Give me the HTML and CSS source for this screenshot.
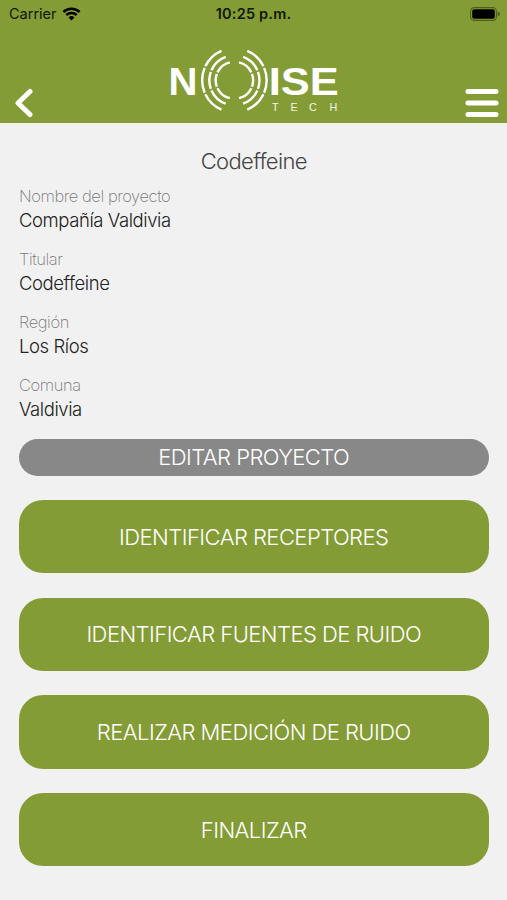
FILE: index.html
```html
<!DOCTYPE html>
<html lang="es">
<head>
	<meta charset="UTF-8">
	<meta name="viewport" content="width=device-width, initial-scale=1.0">
	<title>Noise Tech</title>
	<link rel="stylesheet" href="styles.css">
</head>
<body>
	<header class="header">
		<div class="status-bar">
			<div class="carrier">
				<span class="carrier-name">Carrier</span>
				<svg class="wifi" width="19" height="14" viewBox="0 0 19 14">
					<path d="M1.4 5 A11.6 11.6 0 0 1 17.6 5" />
					<path d="M4.3 8 A7.5 7.5 0 0 1 14.7 8" />
					<path class="wifi-dot" d="M9.5 13.4 L6.6 10.5 A4.1 4.1 0 0 1 12.4 10.5 Z" />
				</svg>
			</div>
			<span class="time">10:25 p.m.</span>
			<svg class="battery" width="30" height="14" viewBox="0 0 30 14">
				<rect class="battery-case" x="0.6" y="0.6" width="25.8" height="12.8" rx="3.6" />
				<rect x="2.2" y="2.2" width="22.6" height="9.6" rx="2" />
				<path class="battery-tip" d="M27.6 4.5 Q30 5.4 30 7 Q30 8.6 27.6 9.5 Z" />
			</svg>
		</div>
		<div class="nav-bar">
			<button class="icon-btn" aria-label="Volver">
				<svg width="18" height="30" viewBox="0 0 18 30">
					<path d="M15 3.5 L3 15 L15 26.5" />
				</svg>
			</button>
			<svg class="logo" width="190" height="80" viewBox="0 0 190 80">
				<text class="logo-main" x="8.4" y="54.6" textLength="29" lengthAdjust="spacingAndGlyphs">N</text>
				<text class="logo-main" x="108.8" y="54.6" textLength="70" lengthAdjust="spacingAndGlyphs">ISE</text>
				<text class="logo-sub" x="112 130.5 149 169.5" y="70.5">TECH</text>
				<g id="waves">
					<path pathLength="134" stroke-dasharray="41 3 46 3 41" d="M61.5 10.9 A32 32 0 0 0 61.5 69.7" />
					<path pathLength="140" stroke-dasharray="46 4 40 4 46" d="M65.7 16.9 A24.9 24.9 0 0 0 65.7 63.7" />
					<path pathLength="150" stroke-dasharray="50 5 40 5 50" d="M69.8 22.4 A18.4 18.4 0 0 0 69.8 58.2" />
				</g>
				<use href="#waves" transform="translate(148.8 0) scale(-1 1)" />
			</svg>
			<button class="icon-btn" aria-label="Menú">
				<svg width="34" height="30" viewBox="0 0 34 30">
					<path d="M3 3.5 H31 M3 15 H31 M3 26.5 H31" />
				</svg>
			</button>
		</div>
	</header>

	<main class="content">
		<h1 class="title">Codeffeine</h1>
		<dl class="details">
			<div class="field">
				<dt>Nombre del proyecto</dt>
				<dd>Compañía Valdivia</dd>
			</div>
			<div class="field">
				<dt>Titular</dt>
				<dd>Codeffeine</dd>
			</div>
			<div class="field">
				<dt>Región</dt>
				<dd>Los Ríos</dd>
			</div>
			<div class="field">
				<dt>Comuna</dt>
				<dd>Valdivia</dd>
			</div>
		</dl>
		<div class="actions">
			<button class="btn btn-edit">EDITAR PROYECTO</button>
			<button class="btn">IDENTIFICAR RECEPTORES</button>
			<button class="btn">IDENTIFICAR FUENTES DE RUIDO</button>
			<button class="btn">REALIZAR MEDICIÓN DE RUIDO</button>
			<button class="btn">FINALIZAR</button>
		</div>
	</main>
</body>
</html>
```
FILE: styles.css
```css
* {
	box-sizing: border-box;
}

body {
	margin: 0;
	min-height: 900px;
	background-color: #f1f1f1;
	font-family: Inter, "Liberation Sans", sans-serif;
	color: #222;
}

button {
	border: none;
	padding: 0;
	font-family: inherit;
	cursor: pointer;
}

.header {
	height: 123px;
	background-color: #849c35;
}

.status-bar {
	display: grid;
	grid-template-columns: 1fr auto 1fr;
	align-items: center;
	height: 27px;
	padding: 0 7px 0 9px;
	color: #111704;
}

.carrier {
	display: flex;
	align-items: center;
	gap: 5px;
}

.carrier-name {
	font-size: 14.5px;
}

.wifi {
	fill: none;
	stroke: #000;
	stroke-width: 2.5;
}

.wifi-dot {
	fill: #000;
	stroke: none;
}

.time {
	margin-right: 2px;
	font-size: 14.5px;
	font-weight: 600;
	letter-spacing: 0.2px;
}

.battery {
	justify-self: end;
}

.battery-case {
	fill: none;
	stroke: #4f5f1b;
	stroke-width: 1.1;
}

.battery-tip {
	fill: #4f5f1b;
}

.nav-bar {
	display: flex;
	justify-content: space-between;
	align-items: flex-end;
	height: 91px;
	padding: 0 8px 0 15px;
}

.icon-btn {
	display: flex;
	background: none;
}

.icon-btn path {
	fill: none;
	stroke: #fff;
	stroke-width: 5;
	stroke-linecap: round;
	stroke-linejoin: round;
}

.logo {
	margin: 0 0 -2px 12px;
}

.logo-main {
	font: bold 39px "Liberation Sans", sans-serif;
	fill: #fff;
}

.logo-sub {
	font: 10.8px "Liberation Sans", sans-serif;
	fill: #f3f7e4;
}

#waves path {
	fill: none;
	stroke: #fff;
	stroke-width: 2.4;
}

.content {
	padding: 0 18.5px 0 19px;
}

.title {
	margin: 0;
	padding-top: 24px;
	font-size: 22px;
	font-weight: 300;
	line-height: 28px;
	letter-spacing: -0.65px;
	text-align: center;
	color: #444;
}

.details {
	display: flex;
	flex-direction: column;
	gap: 15px;
	margin: 9px 0 0;
}

.field {
	height: 48px;
}

.field dt {
	font-size: 16.5px;
	font-weight: 200;
	line-height: 24px;
	letter-spacing: -0.42px;
	color: #777;
}

.field dd {
	margin: 0;
	font-size: 18.5px;
	font-weight: 350;
	line-height: 24px;
	letter-spacing: -0.42px;
}

.actions {
	display: flex;
	flex-direction: column;
	gap: 24.4px;
	margin-top: 17.5px;
}

.btn {
	height: 73.3px;
	border-radius: 24px;
	background-color: #849c35;
	color: #fff;
	font-size: 22px;
	font-weight: 300;
	letter-spacing: -0.55px;
}

.btn-edit {
	height: 37px;
	border-radius: 18.5px;
	background-color: #888;
}
```
